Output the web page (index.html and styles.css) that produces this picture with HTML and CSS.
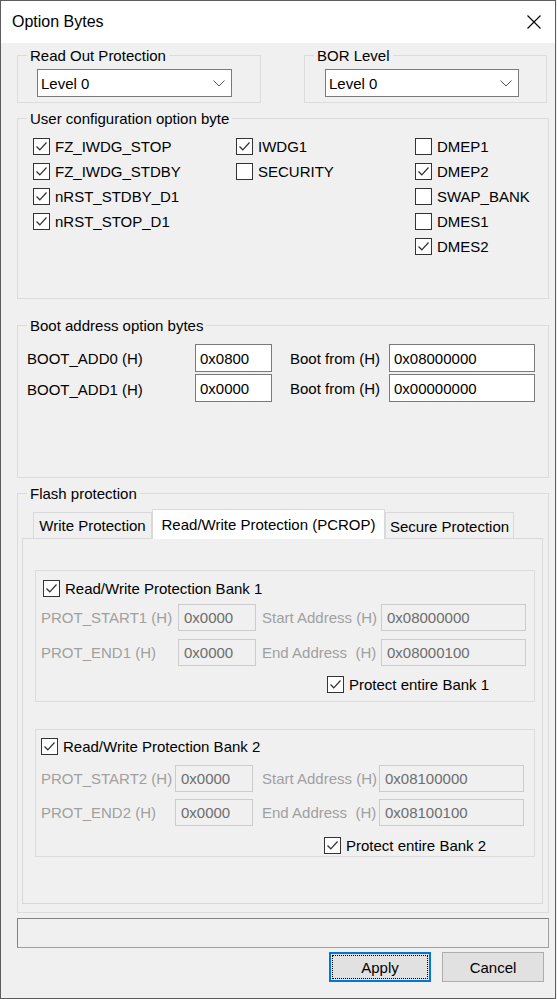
FILE: index.html
```html
<!DOCTYPE html>
<html lang="en">
<head>
  <meta charset="UTF-8" />
  <meta name="viewport" content="width=device-width, initial-scale=1.0"/>
  <title>Option Bytes</title>
  <link rel="stylesheet" href="styles.css">
</head>
<body>

<div class="window">
  <div class="titlebar">
    <span class="title">Option Bytes</span>
    <svg class="close" width="14" height="14" viewBox="0 0 14 14"><path d="M0.5 0.5 L13.5 13.5 M13.5 0.5 L0.5 13.5" stroke="#000" stroke-width="1.1" fill="none"/></svg>
  </div>

  <div class="content">
    <div class="top-row">
      <fieldset class="group">
        <legend>Read Out Protection</legend>
        <div class="rdp-body">
          <div class="combo rdp-combo">
            <span>Level 0</span>
            <svg width="12" height="7" viewBox="0 0 12 7"><path d="M0.5 0.5 L6 6 L11.5 0.5" stroke="#555" fill="none"/></svg>
          </div>
        </div>
      </fieldset>
      <fieldset class="group">
        <legend>BOR Level</legend>
        <div class="bor-body">
          <div class="combo bor-combo">
            <span>Level 0</span>
            <svg width="12" height="7" viewBox="0 0 12 7"><path d="M0.5 0.5 L6 6 L11.5 0.5" stroke="#555" fill="none"/></svg>
          </div>
        </div>
      </fieldset>
    </div>

    <fieldset class="group wide user-group">
      <legend>User configuration option byte</legend>
      <div class="user-body">
        <div class="col">
          <div class="chk"><span class="cb"><svg viewBox="0 0 15 15"><path d="M2.5 7.5 L5.8 10.8 L12.5 3.5"/></svg></span>FZ_IWDG_STOP</div>
          <div class="chk"><span class="cb"><svg viewBox="0 0 15 15"><path d="M2.5 7.5 L5.8 10.8 L12.5 3.5"/></svg></span>FZ_IWDG_STDBY</div>
          <div class="chk"><span class="cb"><svg viewBox="0 0 15 15"><path d="M2.5 7.5 L5.8 10.8 L12.5 3.5"/></svg></span>nRST_STDBY_D1</div>
          <div class="chk"><span class="cb"><svg viewBox="0 0 15 15"><path d="M2.5 7.5 L5.8 10.8 L12.5 3.5"/></svg></span>nRST_STOP_D1</div>
        </div>
        <div class="col">
          <div class="chk"><span class="cb"><svg viewBox="0 0 15 15"><path d="M2.5 7.5 L5.8 10.8 L12.5 3.5"/></svg></span>IWDG1</div>
          <div class="chk"><span class="cb"></span>SECURITY</div>
        </div>
        <div class="col">
          <div class="chk"><span class="cb"></span>DMEP1</div>
          <div class="chk"><span class="cb"><svg viewBox="0 0 15 15"><path d="M2.5 7.5 L5.8 10.8 L12.5 3.5"/></svg></span>DMEP2</div>
          <div class="chk"><span class="cb"></span>SWAP_BANK</div>
          <div class="chk"><span class="cb"></span>DMES1</div>
          <div class="chk"><span class="cb"><svg viewBox="0 0 15 15"><path d="M2.5 7.5 L5.8 10.8 L12.5 3.5"/></svg></span>DMES2</div>
        </div>
      </div>
    </fieldset>

    <fieldset class="group wide boot-group">
      <legend>Boot address option bytes</legend>
      <div class="boot-body">
        <span class="lbl">BOOT_ADD0 (H)</span>
        <div class="field">0x0800</div>
        <span></span>
        <span class="lbl">Boot from (H)</span>
        <div class="field">0x08000000</div>

        <span class="lbl low">BOOT_ADD1 (H)</span>
        <div class="field">0x0000</div>
        <span></span>
        <span class="lbl">Boot from (H)</span>
        <div class="field">0x00000000</div>
      </div>
    </fieldset>

    <fieldset class="group wide flash-group">
      <legend>Flash protection</legend>
      <div class="flash-body">
        <div class="tabs">
          <div class="tab tab-write">Write Protection</div>
          <div class="tab active">Read/Write Protection (PCROP)</div>
          <div class="tab tab-secure">Secure Protection</div>
        </div>
        <div class="panel">

          <div class="bank bank1">
            <div class="chk bank-title"><span class="cb"><svg viewBox="0 0 15 15"><path d="M2.5 7.5 L5.8 10.8 L12.5 3.5"/></svg></span>Read/Write Protection Bank 1</div>
            <div class="bank-grid">
              <span class="dis">PROT_START1 (H)</span>
              <div class="field off">0x0000</div>
              <span></span>
              <span class="dis">Start Address (H)</span>
              <div class="field off">0x08000000</div>

              <span class="dis">PROT_END1 (H)</span>
              <div class="field off">0x0000</div>
              <span></span>
              <span class="dis">End Address &nbsp;(H)</span>
              <div class="field off">0x08000100</div>
            </div>
            <div class="chk protect"><span class="cb"><svg viewBox="0 0 15 15"><path d="M2.5 7.5 L5.8 10.8 L12.5 3.5"/></svg></span>Protect entire Bank 1</div>
          </div>

          <div class="bank bank2">
            <div class="chk bank-title"><span class="cb"><svg viewBox="0 0 15 15"><path d="M2.5 7.5 L5.8 10.8 L12.5 3.5"/></svg></span>Read/Write Protection Bank 2</div>
            <div class="bank-grid">
              <span class="dis">PROT_START2 (H)</span>
              <div class="field off">0x0000</div>
              <span></span>
              <span class="dis">Start Address (H)</span>
              <div class="field off">0x08100000</div>

              <span class="dis">PROT_END2 (H)</span>
              <div class="field off">0x0000</div>
              <span></span>
              <span class="dis">End Address &nbsp;(H)</span>
              <div class="field off">0x08100100</div>
            </div>
            <div class="chk protect"><span class="cb"><svg viewBox="0 0 15 15"><path d="M2.5 7.5 L5.8 10.8 L12.5 3.5"/></svg></span>Protect entire Bank 2</div>
          </div>

        </div>
      </div>
    </fieldset>

    <div class="status"></div>

    <div class="buttons">
      <button class="btn default">Apply</button>
      <button class="btn">Cancel</button>
    </div>
  </div>
</div>

</body>
</html>
```

FILE: styles.css
```css
* {
  box-sizing: border-box;
}
body {
  margin: 0;
  background: #f0f0f0;
  font-family: "Liberation Sans", Arial, sans-serif;
  font-size: 15px;
  color: #000;
}
.window {
  width: 556px;
  height: 999px;
  border: 1px solid #5d5d5d;
  background: #f0f0f0;
  display: flex;
  flex-direction: column;
}
.titlebar {
  height: 42px;
  background: #fff;
  display: flex;
  align-items: center;
  justify-content: space-between;
  padding: 0 14px 0 11px;
}
.title {
  font-size: 16px;
}
.content {
  padding: 4px 0 0 16px;
}

/* group boxes */
.group {
  margin: 0;
  padding: 0;
  border: 1px solid #dcdcdc;
  min-width: 0;
}
.group legend {
  margin-left: 9px;
  padding: 0 3px;
  line-height: 17px;
}
.wide {
  width: 532px;
}
.top-row {
  display: grid;
  grid-template-columns: 244px 243px;
  column-gap: 43px;
}
.rdp-body {
  padding: 5px 0 5px 19px;
}
.bor-body {
  padding: 5px 0 5px 20px;
}
.combo {
  height: 28px;
  border: 1px solid #7a7a7a;
  background: #fff;
  display: flex;
  align-items: center;
  justify-content: space-between;
  padding: 0 6px 0 3px;
}
.rdp-combo {
  width: 195px;
}
.bor-combo {
  width: 194px;
}

/* checkboxes */
.group.user-group {
  margin-top: 7px;
}
.user-body {
  display: grid;
  grid-template-columns: 203px 179px 1fr;
  padding: 7px 0 39px 15px;
  align-items: start;
}
.chk {
  display: flex;
  align-items: center;
  gap: 5px;
  height: 25px;
  white-space: nowrap;
}
.cb {
  width: 17px;
  height: 17px;
  border: 1px solid #333;
  background: #fff;
  flex: none;
}
.cb svg {
  display: block;
  width: 15px;
  height: 15px;
  fill: none;
  stroke: #333;
  stroke-width: 1.25;
}

/* boot address */
.group.boot-group {
  margin-top: 18px;
}
.boot-body {
  display: grid;
  grid-template-columns: 168px 77px 18px 99px 146px;
  grid-auto-rows: 28px;
  row-gap: 2px;
  align-items: center;
  padding: 10px 0 75px 9px;
}
.lbl.low {
  padding-top: 3px;
}
.field {
  height: 100%;
  border: 1px solid #7a7a7a;
  background: #fff;
  display: flex;
  align-items: center;
  padding-left: 4px;
}
.field.off {
  border-color: #cccccc;
  background: #f0f0f0;
  color: #6d6d6d;
}
.dis {
  color: #a0a0a0;
  white-space: nowrap;
}

/* flash protection */
.group.flash-group {
  margin-top: 7px;
}
.flash-body {
  padding: 7px 5px 8px 4px;
}
.tabs {
  display: flex;
  align-items: flex-end;
  height: 29px;
  margin-left: 11px;
}
.tab {
  height: 26px;
  border: 1px solid #d9d9d9;
  border-bottom: none;
  background: #f0f0f0;
  display: flex;
  align-items: center;
  justify-content: center;
  white-space: nowrap;
}
.tab-write {
  width: 119px;
}
.tab-secure {
  width: 129px;
  padding-top: 1px;
}
.tab.active {
  width: 233px;
  height: 30px;
  margin-bottom: -1px;
  background: #fff;
  position: relative;
  padding-bottom: 1px;
}
.panel {
  height: 366px;
  border: 1px solid #d9d9d9;
  padding: 31px 7px 0 12px;
}
.bank {
  border: 1px solid #dcdcdc;
  padding-left: 5px;
}
.bank-title {
  height: 20px;
}
.bank-grid {
  display: grid;
  grid-auto-rows: 27px;
  align-items: center;
}
.bank-grid .field {
  padding-left: 5px;
}
.protect {
  height: 20px;
}
.bank1 {
  padding-top: 7px;
  padding-bottom: 7px;
}
.bank1 .bank-title {
  margin-left: 2px;
}
.bank1 .bank-grid {
  grid-template-columns: 137px 78px 6px 119px 145px;
  row-gap: 8px;
  margin-top: 6px;
}
.bank1 .protect {
  margin: 8px 0 0 286px;
}
.bank2 {
  margin-top: 27px;
  padding-top: 6px;
  padding-bottom: 1px;
}
.bank2 .bank-grid {
  grid-template-columns: 134px 78px 9px 117px 145px;
  row-gap: 7px;
  margin-top: 9px;
}
.bank2 .protect {
  margin: 9px 0 0 283px;
}

/* bottom */
.status {
  width: 532px;
  height: 30px;
  margin-top: 5px;
  border: 1px solid #a0a0a0;
  border-top-color: #828282;
  border-left-color: #828282;
}
.buttons {
  display: flex;
  justify-content: flex-end;
  gap: 11px;
  margin-top: 4px;
  padding-right: 11px;
}
.btn {
  width: 102px;
  height: 30px;
  font-family: "Liberation Sans", Arial, sans-serif;
  font-size: 15px;
  color: #000;
  background: #e1e1e1;
  border: 1px solid #adadad;
  padding: 0;
}
.btn.default {
  border: 2px solid #0078d7;
  outline: 1px dotted #000;
  outline-offset: -4px;
}
```
